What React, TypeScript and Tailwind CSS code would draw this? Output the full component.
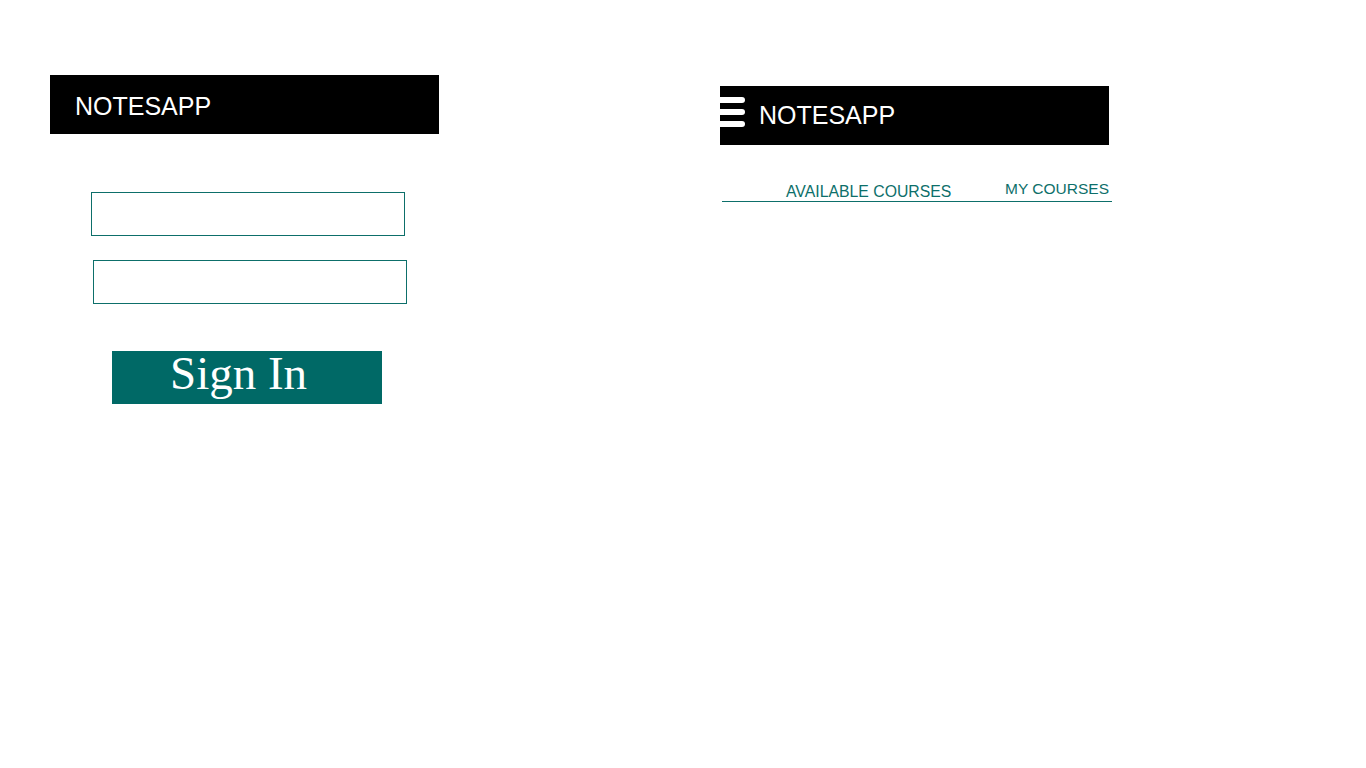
import React from 'react';

const sans = { fontFamily: '"Liberation Sans", Arial, sans-serif' };

function LoginPanel() {
  return (
    <div className="w-[389px] pt-[75px]">
      {/* barra do topo */}
      <div className="h-[59px] w-[389px] bg-black pt-[19px] pl-[25px]">
        <span className="block text-[25px] leading-[25px] text-white" style={sans}>
          NOTESAPP
        </span>
      </div>

      <input
        type="text"
        className="ml-[41px] mt-[58px] block h-[44px] w-[314px] border border-[#0d6f6a] bg-white outline-none"
      />
      <input
        type="password"
        className="ml-[43px] mt-[24px] block h-[44px] w-[314px] border border-[#0d6f6a] bg-white outline-none"
      />

      <button className="ml-[62px] mt-[47px] flex h-[53px] w-[270px] items-start bg-[#006966] pl-[58px] text-left">
        <span
          className="text-[47px] leading-[44px] text-white"
          style={{ fontFamily: '"Liberation Serif", "Times New Roman", serif' }}
        >
          Sign In
        </span>
      </button>
    </div>
  );
}

function CoursesPanel() {
  return (
    <div className="ml-[281px] mt-[86px] w-[392px]">
      <div className="flex h-[59px] w-[389px] items-start bg-black">
        {/* menu hamburguer */}
        <div className="mt-[11px] flex w-[25px] flex-col gap-[6px]">
          <span className="block h-[6px] w-[25px] rounded-r-full bg-white" />
          <span className="block h-[6px] w-[25px] rounded-r-full bg-white" />
          <span className="block h-[6px] w-[25px] rounded-r-full bg-white" />
        </div>
        <span className="ml-[14px] mt-[17px] block text-[25px] leading-[25px] text-white" style={sans}>
          NOTESAPP
        </span>
      </div>

      <div className="ml-[2px] flex h-[57px] w-[390px] items-end border-b border-[#0d6f6a] text-[#0d6f6a]" style={sans}>
        <span className="mb-[1px] ml-[64px] text-[15.8px] leading-[16px]">AVAILABLE COURSES</span>
        <span className="mb-[4px] ml-auto mr-[3px] text-[15.5px] leading-[16px]">MY COURSES</span>
      </div>
    </div>
  );
}

export default function App() {
  return (
    <div className="flex h-[768px] w-[1366px] items-start bg-white pl-[50px]">
      <LoginPanel />
      <CoursesPanel />
    </div>
  );
}
